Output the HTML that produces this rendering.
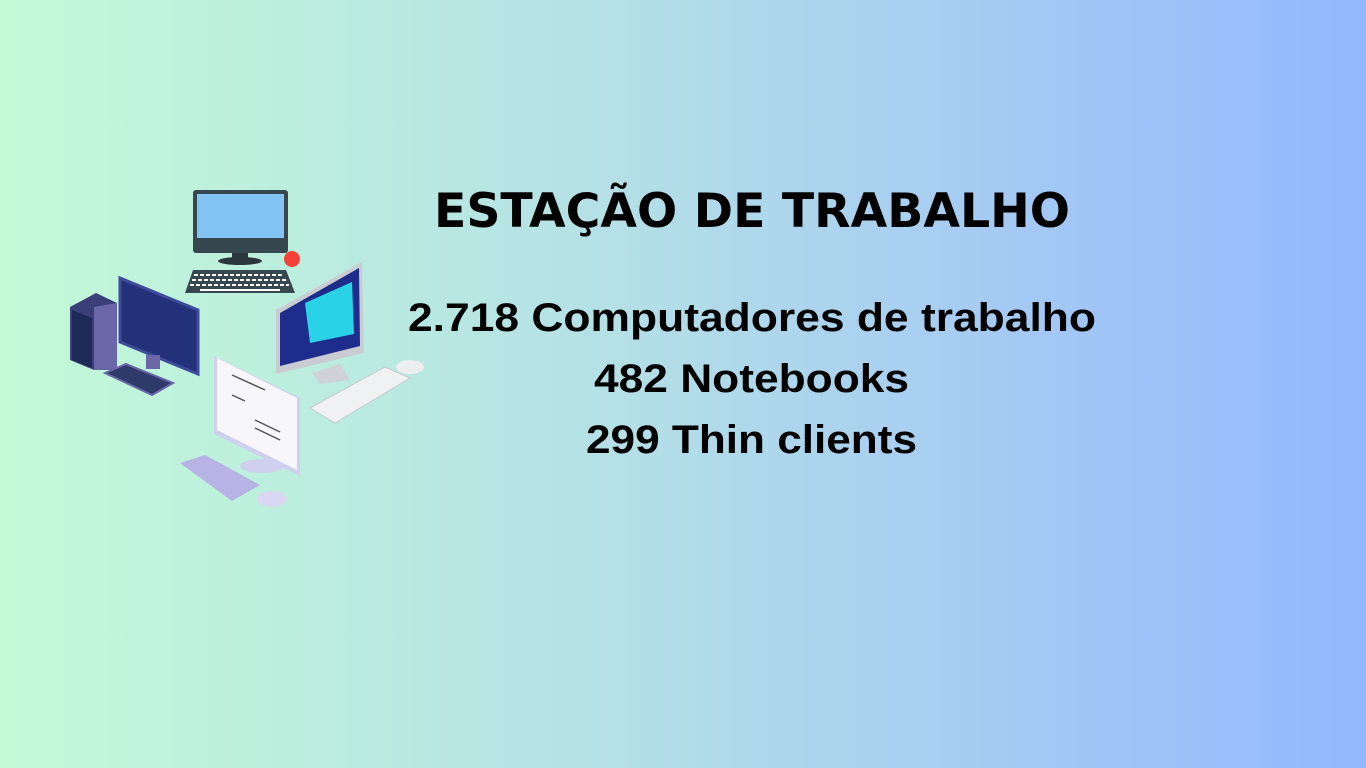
<!DOCTYPE html>
<html><head><meta charset="utf-8"><style>
html,body{margin:0;padding:0;}
body{width:1366px;height:768px;overflow:hidden;background:linear-gradient(90deg,#c3fad7 0%,#b4e0e6 45%,#a4c9f4 75%,#93b8fe 100%);}
svg{position:absolute;left:0;top:0}
</style></head><body>
<svg width="1366" height="768" viewBox="0 0 1366 768">
<g font-family="'Liberation Sans',sans-serif" font-weight="bold" fill="#000">
<text x="434" y="227" font-size="47" textLength="636" lengthAdjust="spacingAndGlyphs" font-family="'DejaVu Sans','Liberation Sans',sans-serif">ESTAÇÃO DE TRABALHO</text>
<text x="408" y="331" font-size="40" textLength="688" lengthAdjust="spacingAndGlyphs">2.718 Computadores de trabalho</text>
<text x="594" y="392" font-size="40" textLength="315" lengthAdjust="spacingAndGlyphs">482 Notebooks</text>
<text x="586" y="453" font-size="40" textLength="331" lengthAdjust="spacingAndGlyphs">299 Thin clients</text>
</g>
<!-- top monitor -->
<rect x="193" y="190" width="95" height="63" rx="3" fill="#37474f"/>
<rect x="197" y="194" width="87" height="44" fill="#84c4f5"/>
<rect x="232" y="253" width="16" height="6" fill="#2b373d"/>
<ellipse cx="240" cy="261" rx="22" ry="4" fill="#2b373d"/>
<circle cx="292" cy="259" r="8" fill="#f44336"/>
<polygon points="193,270 286,270 295,293 185,293" fill="#37474f"/>
<g stroke="#fff" stroke-width="2" stroke-dasharray="4 2"><line x1="194" y1="275" x2="284" y2="275"/><line x1="192" y1="280" x2="287" y2="280"/><line x1="190" y1="285" x2="289" y2="285"/></g>
<line x1="200" y1="290" x2="280" y2="290" stroke="#fff" stroke-width="2"/>
<!-- tower + blue monitor -->
<polygon points="70,307 96,293 117,303 117,370 94,370 70,360" fill="#3a3f7a"/>
<polygon points="94,307 117,303 117,370 94,370" fill="#6a66a8"/>
<polygon points="72,310 92,318 92,368 72,360" fill="#1e2a55"/>
<polygon points="120,278 198,310 198,374 120,342" fill="#22317a" stroke="#3e4b9a" stroke-width="3"/>
<rect x="146" y="355" width="14" height="14" fill="#6a66a8"/>
<polygon points="105,373 126,364 173,383 152,395" fill="#2d3a6a" stroke="#6a66a8" stroke-width="2"/>
<!-- imac -->
<polygon points="276,310 362,262 364,353 276,374" fill="#c9cdd3"/>
<polygon points="280,313 359,268 360,346 280,366" fill="#1e2c8c"/>
<polygon points="305,303 352,282 354,334 310,343" fill="#2ad2e6"/>
<polygon points="312,373 340,364 350,380 320,384" fill="#cfd2d6"/>
<polygon points="310,408 385,367 410,378 335,423" fill="#f0f1f3" stroke="#c8cbd0"/>
<ellipse cx="410" cy="367" rx="14" ry="7" fill="#eceef0"/>
<!-- white monitor -->
<polygon points="214,356 300,398 300,476 214,434" fill="#cfd0ee"/>
<polygon points="217,358 297,398 297,470 217,430" fill="#f7f7fb"/>
<g stroke="#555" stroke-width="1.5"><line x1="232" y1="375" x2="265" y2="390"/><line x1="232" y1="395" x2="245" y2="401"/><line x1="255" y1="420" x2="280" y2="432"/><line x1="255" y1="428" x2="280" y2="440"/></g>
<ellipse cx="262" cy="466" rx="22" ry="7" fill="#cfd0ee"/>
<polygon points="180,463 205,455 260,485 232,501" fill="#b7b3e4"/>
<ellipse cx="272" cy="499" rx="15" ry="8" fill="#d9d7f2"/>
</svg>
</body></html>
